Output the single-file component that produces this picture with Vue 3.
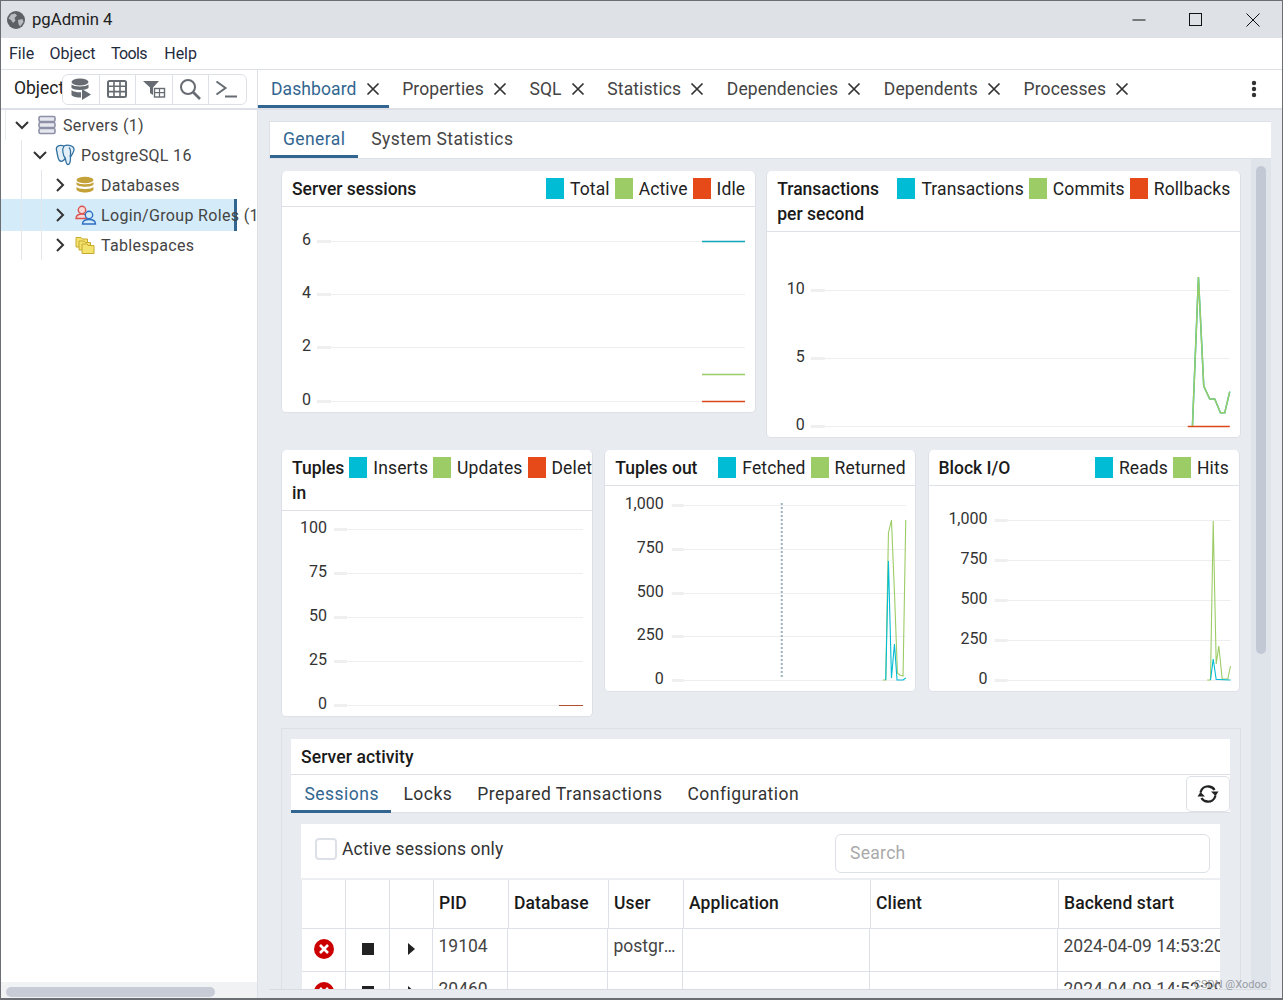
<script setup>
const mainTabs = ['Dashboard', 'Properties', 'SQL', 'Statistics', 'Dependencies', 'Dependents', 'Processes']
const menus = ['File', 'Object', 'Tools', 'Help']
const T = '#00bcd4', G = '#9ccc65', R = '#e64a19'

const row1 = [
  {
    title: 'Server sessions', legend: [['Total', T], ['Active', G], ['Idle', R]],
    vx: 282, vy: 207, w: 473,
    labelEnd: 311, tick: [317, 331], end: 745,
    ticks: [['6', 241], ['4', 294], ['2', 347], ['0', 401]],
    series: [
      ['#0fa5bd', '702,241.5 745,241.5'],
      [G, '702,374.5 745,374.5'],
      ['#d9471a', '702,401.5 745,401.5']
    ]
  },
  {
    title: 'Transactions per second', legend: [['Transactions', T], ['Commits', G], ['Rollbacks', R]],
    vx: 767.25, vy: 232, w: 473,
    labelEnd: 805, tick: [811, 825], end: 1230,
    ticks: [['10', 290], ['5', 358], ['0', 426]],
    series: [
      [T, '1192.7,426 1198.7,277 1204,386 1210,399 1215,399 1220.7,412.7 1225,412.7 1230,391.7'],
      [G, '1192.7,426 1198.7,277 1204,386 1210,399 1215,399 1220.7,412.7 1225,412.7 1230,391.7'],
      ['#d9471a', '1188,426.5 1230,426.5']
    ]
  }
]

const row2 = [
  {
    title: 'Tuples in', legend: [['Inserts', T], ['Updates', G], ['Deleted', R]],
    vx: 282, vy: 511, w: 310,
    labelEnd: 327, tick: [334, 347], end: 583,
    ticks: [['100', 529], ['75', 573], ['50', 617], ['25', 661], ['0', 705]],
    series: [['#b5502f', '559,705.5 583,705.5']]
  },
  {
    title: 'Tuples out', legend: [['Fetched', T], ['Returned', G]],
    vx: 605.25, vy: 486, w: 310,
    labelEnd: 664, tick: [672, 684], end: 906,
    ticks: [['1,000', 505], ['750', 549], ['500', 593], ['250', 636], ['0', 680]],
    dashed: [782, 503, 679],
    series: [
      [G, '883,680 886,680 888.7,533 891.7,520 895,600 897.7,673 900,675 903.3,676 906,520'],
      [T, '886,680 888.7,561 891.7,678 894.7,644 897.3,680 903.3,680 906,678']
    ]
  },
  {
    title: 'Block I/O', legend: [['Reads', T], ['Hits', G]],
    vx: 928.5, vy: 486, w: 310,
    labelEnd: 987, tick: [994, 1007], end: 1230,
    ticks: [['1,000', 520], ['750', 560], ['500', 600], ['250', 640], ['0', 680]],
    series: [
      [G, '1206.7,680 1210,680 1212.7,521 1215.7,664 1218.3,646 1221.7,679 1227.3,679 1230,666'],
      [T, '1210,680 1212.7,659 1215.7,679.5 1218.3,679.5 1230,680']
    ]
  }
]

const activityTabs = ['Sessions', 'Locks', 'Prepared Transactions', 'Configuration']
const heads = ['', '', '', 'PID', 'Database', 'User', 'Application', 'Client', 'Backend start']
const rows = [
  { pid: '19104', user: 'postgres', start: '2024-04-09 14:53:20' },
  { pid: '20460', user: '', start: '2024-04-09 14:52:39' }
]
</script>

<template>
  <div class="app">
    <header class="titlebar">
      <svg class="globe" width="20" height="20" viewBox="0 0 20 20">
        <circle cx="10" cy="10" r="9" fill="#5d6166" />
        <path d="M5 4.5 9 3.5 11 5.5 8.5 8 9.5 10.5 7 13 5 10 2.5 8.5Z" fill="#b9bdc2" />
        <path d="M12 10 16.5 9 17.5 12 14 16.5 12.5 14Z" fill="#b9bdc2" />
      </svg>
      <span class="wintitle">pgAdmin 4</span>
      <div class="winctl">
        <svg width="14" height="14" viewBox="0 0 14 14"><path d="M0.5 7H13.5" stroke="#111" fill="none" /></svg>
        <svg width="14" height="14" viewBox="0 0 14 14"><rect x="0.5" y="0.5" width="12" height="12" stroke="#111" fill="none" /></svg>
        <svg width="14" height="14" viewBox="0 0 14 14"><path d="M0.5 0.5 13.5 13.5M13.5 0.5 0.5 13.5" stroke="#111" fill="none" /></svg>
      </div>
    </header>

    <nav class="menubar">
      <span v-for="m in menus" :key="m" class="menu">{{ m }}</span>
    </nav>

    <div class="workspace">
      <aside class="browser">
        <div class="browser-head">
          <span class="browser-tab">Object Explorer</span>
          <div class="tools">
            <button class="tool">
              <svg width="22" height="24" viewBox="0 0 22 24">
                <ellipse cx="10" cy="5" rx="8.5" ry="3.5" fill="#666c72" />
                <path d="M1.5 7.5C4 10 16 10 18.500 7.500V11C16 13.500 4 13.500 1.500 11Z" fill="#666c72" />
                <path d="M1.5 13C4 15.500 10 15.500 11 15.200V20.500C7 20.500 3 20 1.500 18Z" fill="#666c72" />
                <path d="M12 12 21 17.500 12 23Z" fill="#666c72" />
              </svg>
            </button>
            <button class="tool">
              <svg width="20" height="18" viewBox="0 0 20 18">
                <rect x="1" y="1" width="18" height="16" rx="1.5" fill="none" stroke="#666c72" stroke-width="2" />
                <path d="M1 6.300H19M1 11.600H19M7 1V17M13 1V17" stroke="#666c72" stroke-width="1.600" />
              </svg>
            </button>
            <button class="tool">
              <svg width="24" height="20" viewBox="0 0 24 20">
                <path d="M1 2H17L11 8.500V16L8 14V8.500Z" fill="#666c72" />
                <rect x="12.500" y="9.500" width="10" height="8.500" fill="#fff" stroke="#666c72" stroke-width="1.400" />
                <path d="M12.500 13.700H22.500M17.500 9.500V18" stroke="#666c72" stroke-width="1.200" />
              </svg>
            </button>
            <button class="tool">
              <svg width="22" height="22" viewBox="0 0 22 22">
                <circle cx="9" cy="9" r="7" fill="none" stroke="#666c72" stroke-width="2" />
                <path d="M14 14 21 21" stroke="#666c72" stroke-width="2.600" />
              </svg>
            </button>
            <button class="tool">
              <svg width="24" height="20" viewBox="0 0 24 20">
                <path d="M1.500 2.500 10.500 9 1.500 15.500" fill="none" stroke="#666c72" stroke-width="2" />
                <path d="M10 17.500H22" stroke="#666c72" stroke-width="2" />
              </svg>
            </button>
          </div>
        </div>

        <div class="tree">
          <div class="row lv0">
            <svg class="chev" width="16" height="16" viewBox="0 0 16 16"><path d="M2 5 8 11 14 5" fill="none" stroke="#333" stroke-width="2" /></svg>
            <svg class="ico" width="20" height="20" viewBox="0 0 20 20">
              <g fill="#e7e8ef" stroke="#8d90a6" stroke-width="1.600">
                <rect x="2" y="1.500" width="16" height="5" rx="1.500" />
                <rect x="2" y="7.500" width="16" height="5" rx="1.500" />
                <rect x="2" y="13.500" width="16" height="5" rx="1.500" />
              </g>
            </svg>
            <span class="label">Servers (1)</span>
          </div>
          <div class="row lv1">
            <svg class="chev" width="16" height="16" viewBox="0 0 16 16"><path d="M2 5 8 11 14 5" fill="none" stroke="#333" stroke-width="2" /></svg>
            <svg class="ico" width="20" height="22" viewBox="0 0 20 22">
              <path d="M1.500 6C0.500 2 5 0.500 9 2 12 0.500 19.500 1 19 6 18.500 9 16.500 11 15.500 13 15.500 17 15 20.500 13 20.500 11 20.500 10.800 16 10.300 14.500 8.500 17 6 18.500 4 16 2.500 13.500 2.500 10 1.500 6Z" fill="#e2eff8" stroke="#2f6f9f" stroke-width="1.300" />
              <path d="M9 2C7 5 7.500 10.500 10.300 14.500M14 3.500C16.500 6 15.500 10.500 15 13" fill="none" stroke="#2f6f9f" stroke-width="1.200" />
            </svg>
            <span class="label">PostgreSQL 16</span>
          </div>
          <div class="row lv2">
            <svg class="chev" width="16" height="16" viewBox="0 0 16 16"><path d="M5 2 11 8 5 14" fill="none" stroke="#333" stroke-width="2" /></svg>
            <svg class="ico" width="20" height="18" viewBox="0 0 20 18">
              <ellipse cx="10" cy="4" rx="8.500" ry="3.200" fill="#c4a23a" />
              <path d="M1.500 6C3 9 17 9 18.500 6V8.500C17 11.500 3 11.500 1.500 8.500Z" fill="#c4a23a" />
              <path d="M1.500 10.800C3 13.800 17 13.800 18.500 10.800V13.500C17 17.500 3 17.500 1.500 13.500Z" fill="#c4a23a" />
            </svg>
            <span class="label">Databases</span>
          </div>
          <div class="row lv2 selected">
            <svg class="chev" width="16" height="16" viewBox="0 0 16 16"><path d="M5 2 11 8 5 14" fill="none" stroke="#333" stroke-width="2" /></svg>
            <svg class="ico roles" width="22" height="20" viewBox="0 0 22 20">
              <circle cx="7" cy="5" r="3.700" fill="#f7d9d9" stroke="#d9534f" stroke-width="1.400" />
              <path d="M1 13.500C1 10 4 9 7 9 9 9 10.500 9.500 11.500 10.500V13.500Z" fill="#f7d9d9" stroke="#d9534f" stroke-width="1.400" />
              <circle cx="14" cy="10" r="3.700" fill="#d4ecfa" stroke="#2f6fc4" stroke-width="1.400" />
              <path d="M7.500 19C7.500 15.500 10.500 14.500 14 14.500S20.500 15.500 20.500 19Z" fill="#d4ecfa" stroke="#2f6fc4" stroke-width="1.400" />
            </svg>
            <span class="label">Login/Group Roles (1)</span>
          </div>
          <div class="row lv2">
            <svg class="chev" width="16" height="16" viewBox="0 0 16 16"><path d="M5 2 11 8 5 14" fill="none" stroke="#333" stroke-width="2" /></svg>
            <svg class="ico" width="20" height="20" viewBox="0 0 20 20">
              <path d="M1 2.500H6L7.500 4H12.500V12H1Z" fill="#f3e36d" stroke="#c7a92e" />
              <path d="M4 6H9L10.500 7.500H15.500V15H4Z" fill="#f3e36d" stroke="#c7a92e" />
              <path d="M7 9H12L13 10.500H19V18.500H7Z" fill="#f3e36d" stroke="#c7a92e" />
            </svg>
            <span class="label">Tablespaces</span>
          </div>
        </div>

        <div class="hscroll"><div class="hthumb"></div></div>
      </aside>

      <main class="main">
        <div class="tabbar">
          <div v-for="(t, i) in mainTabs" :key="t" class="mtab" :class="{ on: i === 0 }">
            <span>{{ t }}</span>
            <svg width="14" height="14" viewBox="0 0 14 14"><path d="M1.500 1.500 12.500 12.500M12.500 1.500 1.500 12.500" stroke="#333" stroke-width="1.700" fill="none" /></svg>
          </div>
          <svg class="more" width="6" height="18" viewBox="0 0 6 18">
            <circle cx="3" cy="3" r="2.200" fill="#333" />
            <circle cx="3" cy="9" r="2.200" fill="#333" />
            <circle cx="3" cy="15" r="2.200" fill="#333" />
          </svg>
        </div>

        <div class="dash">
          <div class="dash-tabs">
            <span class="dtab on">General</span>
            <span class="dtab">System Statistics</span>
          </div>
          <div class="dash-body">
            <div class="scroll">
              <section class="grid two">
                <article v-for="c in row1" :key="c.title" class="card">
                  <div class="card-head">
                    <div class="card-title">{{ c.title }}</div>
                    <div class="legend">
                      <template v-for="l in c.legend" :key="l[0]">
                        <i class="swatch" :style="{ background: l[1] }"></i>
                        <span class="ltext">{{ l[0] }}</span>
                      </template>
                    </div>
                  </div>
                  <svg class="plot" :width="c.w" height="205" :viewBox="`${c.vx} ${c.vy} ${c.w} 205`">
                    <g v-for="t in c.ticks" :key="t[0]">
                      <text :x="c.labelEnd" :y="t[1] + 4" text-anchor="end" class="tick">{{ t[0] }}</text>
                      <line :x1="c.tick[0]" :x2="c.tick[1]" :y1="t[1] + 0.5" :y2="t[1] + 0.5" stroke="#efefef" stroke-width="3" />
                      <line :x1="c.tick[1]" :x2="c.end" :y1="t[1] + 0.5" :y2="t[1] + 0.5" stroke="#eeeeee" />
                    </g>
                    <polyline v-for="s in c.series" :key="s[0]" :points="s[1]" :stroke="s[0]" fill="none" stroke-width="1.500" />
                  </svg>
                </article>
              </section>

              <section class="grid three">
                <article v-for="c in row2" :key="c.title" class="card">
                  <div class="card-head">
                    <div class="card-title">{{ c.title }}</div>
                    <div class="legend">
                      <template v-for="l in c.legend" :key="l[0]">
                        <i class="swatch" :style="{ background: l[1] }"></i>
                        <span class="ltext">{{ l[0] }}</span>
                      </template>
                    </div>
                  </div>
                  <svg class="plot" :width="c.w" height="205" :viewBox="`${c.vx} ${c.vy} ${c.w} 205`">
                    <g v-for="t in c.ticks" :key="t[0]">
                      <text :x="c.labelEnd" :y="t[1] + 4" text-anchor="end" class="tick">{{ t[0] }}</text>
                      <line :x1="c.tick[0]" :x2="c.tick[1]" :y1="t[1] + 0.5" :y2="t[1] + 0.5" stroke="#efefef" stroke-width="3" />
                      <line :x1="c.tick[1]" :x2="c.end" :y1="t[1] + 0.5" :y2="t[1] + 0.5" stroke="#eeeeee" />
                    </g>
                    <line v-if="c.dashed" :x1="c.dashed[0]" :x2="c.dashed[0]" :y1="c.dashed[1]" :y2="c.dashed[2]" stroke="#9db3bf" stroke-width="2" stroke-dasharray="2 2" />
                    <polyline v-for="s in c.series" :key="s[0]" :points="s[1]" :stroke="s[0]" fill="none" stroke-width="1.100" />
                  </svg>
                </article>
              </section>

              <section class="activity">
                <div class="act-title">Server activity</div>
                <div class="act-tabs">
                  <span v-for="(t, i) in activityTabs" :key="t" class="atab" :class="{ on: i === 0 }">{{ t }}</span>
                  <button class="refresh">
                    <svg width="22" height="20" viewBox="0 0 22 20">
                      <path d="M3.500 8.500C4.500 4.500 8 2 12 2.500 14.500 2.800 16.500 4 17.500 6" fill="none" stroke="#222" stroke-width="2.300" />
                      <path d="M21.500 8.500 14 8.500 18.500 13Z" fill="#222" transform="translate(0 -1)" />
                      <path d="M18.500 11.500C17.500 15.500 14 18 10 17.500 7.500 17.200 5.500 16 4.500 14" fill="none" stroke="#222" stroke-width="2.300" />
                      <path d="M0.500 11.500 8 11.500 3.500 7Z" fill="#222" transform="translate(0 1)" />
                    </svg>
                  </button>
                </div>
                <div class="act-tools">
                  <label class="check"><i class="box"></i><span>Active sessions only</span></label>
                  <div class="search">Search</div>
                </div>
                <div class="table">
                  <div class="thead">
                    <div v-for="(h, i) in heads" :key="i" class="th">{{ h }}</div>
                  </div>
                  <div v-for="r in rows" :key="r.pid" class="tr">
                    <div class="td center">
                      <svg width="22" height="22" viewBox="0 0 22 22">
                        <circle cx="11" cy="11" r="10" fill="#cc0000" />
                        <path d="M7 7 15 15M15 7 7 15" stroke="#fff" stroke-width="2.600" />
                      </svg>
                    </div>
                    <div class="td center"><i class="stop"></i></div>
                    <div class="td center"><i class="play"></i></div>
                    <div class="td">{{ r.pid }}</div>
                    <div class="td"></div>
                    <div class="td ell">{{ r.user }}</div>
                    <div class="td"></div>
                    <div class="td"></div>
                    <div class="td nowrap">{{ r.start }}</div>
                  </div>
                </div>
              </section>
            </div>
            <div class="vtrack"><div class="vthumb"></div></div>
          </div>
        </div>
      </main>
    </div>
    <span class="mark">CSDN @Xodoo</span>
  </div>
</template>

<style>
html, body { margin: 0; padding: 0; background: #e8ebf0; }
</style>

<style scoped>
.app {
  position: relative;
  width: 1283px;
  height: 1000px;
  box-sizing: border-box;
  border: 1px solid #6b6f73;
  border-bottom-width: 2px;
  border-top-width: 1px;
  overflow: hidden;
  display: flex;
  flex-direction: column;
  background: #e8ebf0;
  font-family: Roboto, "Liberation Sans", sans-serif;
  font-size: 17.5px;
  color: #222;
}
.titlebar {
  height: 37px;
  flex: none;
  background: #dee1e6;
  display: flex;
  align-items: center;
}
.globe { margin-left: 5px; }
.wintitle { margin-left: 6px; font-size: 16.7px; color: #222; }
.winctl {
  margin-left: auto;
  display: flex;
  gap: 43px;
  margin-right: 22px;
  margin-top: 1px;
}
.menubar {
  height: 31px;
  flex: none;
  background: #fff;
  display: flex;
  align-items: center;
  border-bottom: 1px solid #dde0e6;
  padding-left: 8px;
  gap: 15.5px;
  font-size: 16px;
}
.menu { color: #1f2b3d; }
.menu:nth-child(3) { letter-spacing: -.7px; margin-right: 2px; }
.workspace { flex: 1; display: flex; min-height: 0; }

.browser {
  width: 256px;
  flex: none;
  background: #fff;
  border-right: 1px solid #dde0e6;
  display: flex;
  flex-direction: column;
  overflow: hidden;
}
.browser-head {
  height: 38px;
  flex: none;
  display: flex;
  align-items: center;
  border-bottom: 2px solid #dde0e6;
  box-sizing: content-box;
}
.browser-tab {
  width: 48px;
  margin-left: 13px;
  padding-bottom: 3px;
  overflow: hidden;
  white-space: nowrap;
  flex: none;
}
.tools {
  display: flex;
  height: 29px;
  border: 1px solid #dde0e6;
  border-radius: 6px;
  flex: none;
}
.tool {
  width: 36.5px;
  padding: 0;
  border: 0;
  border-right: 1px solid #dde0e6;
  background: #fff;
  display: flex;
  align-items: center;
  justify-content: center;
}
.tool:first-child { border-radius: 6px 0 0 6px; }
.tool:last-child { border-right: 0; border-radius: 0 6px 6px 0; }

.tree { flex: 1; overflow: hidden; font-size: 16px; letter-spacing: .33px; color: #444; }
.row {
  height: 30px;
  display: flex;
  align-items: center;
  white-space: nowrap;
  background-repeat: no-repeat;
}
.chev { flex: none; margin-right: 7px; }
.ico { flex: none; margin-right: 6px; }
.ico.roles { margin-right: 4px; }
.lv0 {
  padding-left: 13px;
  background-image: linear-gradient(#e9ebef, #e9ebef);
  background-size: 1px 100%;
  background-position: 4px 0;
}
.lv1 { padding-left: 31px; }
.lv2 { padding-left: 51px; }
.lv1 {
  background-image: linear-gradient(#e3e6eb, #e3e6eb);
  background-size: 1px 100%;
  background-position: 20px 0;
}
.lv2 {
  background-image: linear-gradient(#e3e6eb, #e3e6eb), linear-gradient(#e3e6eb, #e3e6eb);
  background-size: 1px 100%, 1px 100%;
  background-position: 20px 0, 40px 0;
}
.lv2.selected {
  height: 32px;
  margin: -1px 0;
  background-image:
    linear-gradient(#e3e6eb, #e3e6eb),
    linear-gradient(#e3e6eb, #e3e6eb),
    linear-gradient(to right, #d4ecfa 233px, #326690 233px, #326690 236px, transparent 236px);
  background-size: 1px 100%, 1px 100%, 100% 100%;
  background-position: 20px 0, 40px 0, 0 0;
}
.hscroll {
  height: 16px;
  flex: none;
  background: #f1f2f4;
  display: flex;
  align-items: flex-end;
  padding-left: 5px;
  box-sizing: border-box;
  padding-bottom: 1px;
}
.hthumb { width: 209px; height: 10px; border-radius: 5px; background: #c8ccd7; }

.main { flex: 1; min-width: 0; display: flex; flex-direction: column; }
.tabbar {
  height: 38px;
  flex: none;
  background: #fff;
  display: flex;
  align-items: stretch;
  border-bottom: 2px solid #dde0e6;
  box-sizing: content-box;
  color: #444;
  letter-spacing: .1px;
}
.mtab {
  display: flex;
  align-items: center;
  padding: 0 9.7px 0 13px;
  gap: 9px;
  box-sizing: border-box;
  height: 38px;
}
.mtab.on { color: #326690; border-bottom: 3px solid #326690; padding-top: 3px; }
.more { margin: auto 25px auto auto; }

.dash {
  flex: 1;
  min-height: 0;
  margin: 11px 11px 8px 11px;
  display: flex;
  flex-direction: column;
  border-bottom: 1px solid #d8dbe1;
}
.dash-tabs {
  height: 36px;
  flex: none;
  display: flex;
  background: #fff;
  border: 1px solid #dde0e6;
  border-width: 1px 0 1px 1px;
  letter-spacing: .4px;
}
.dtab {
  padding: 0 13px 2px;
  display: flex;
  align-items: center;
  color: #444;
}
.dtab.on { color: #326690; box-shadow: inset 0 -3px 0 #326690; }
.dash-body { flex: 1; min-height: 0; display: flex; }
.scroll {
  flex: 1;
  min-width: 0;
  overflow: hidden;
  padding: 12px 10px 0 12px;
}
.vtrack { width: 20px; flex: none; background: #dfe3ea; }
.vthumb { width: 10px; height: 488px; margin: 7px 0 0 5px; border-radius: 5px; background: #c3c8d5; }

.grid { display: grid; align-items: start; }
.two { grid-template-columns: 1fr 1fr; gap: 10.5px; margin-bottom: 12px; }
.three { grid-template-columns: 312px 312px 312px; gap: 11.25px; margin-bottom: 11px; }
.card {
  background: #fff;
  border: 1px solid #dde0e6;
  border-width: 0 1px 1px 1px;
  border-radius: 5px;
  overflow: hidden;
  min-width: 0;
}
.card-head {
  display: flex;
  gap: 5px;
  padding: 6px 9.5px 4px 10px;
  line-height: 25px;
  border-bottom: 1px solid #dde0e6;
}
.card-title { flex: 1 1 0; min-width: min-content; font-weight: 500; color: #1a1a1a; }
.legend { flex: none; display: flex; align-items: flex-start; height: 25px; white-space: nowrap; letter-spacing: .12px; }
.swatch { width: 18px; height: 21px; margin: 1px 6px 0 5px; flex: none; }
.swatch:first-child { margin-left: 0; }
.ltext { color: #222; }
.plot { display: block; }
.tick { font: 16px Roboto, "Liberation Sans", sans-serif; fill: #333; }

.activity {
  background: #e8ebf0;
  border: 1px solid #dde0e6;
  padding: 10px 10px 0 9px;
}
.act-title {
  height: 35px;
  line-height: 36px;
  padding-left: 10px;
  background: #fff;
  font-weight: 500;
  letter-spacing: .1px;
  color: #1a1a1a;
  border-bottom: 1px solid #dde0e6;
}
.act-tabs {
  height: 37px;
  display: flex;
  background: #fff;
  border-bottom: 1px solid #dde0e6;
  margin-bottom: 11px;
}
.atab {
  padding: 0 12.5px;
  display: flex;
  align-items: center;
  color: #333;
  letter-spacing: .47px;
}
.atab.on { color: #326690; padding: 0 12px 0 13.5px; box-shadow: 0 1px 0 #326690, inset 0 -2px 0 #326690; }
.refresh {
  margin-left: auto;
  width: 44px;
  height: 36px;
  margin-top: 1px;
  background: #fff;
  border: 1px solid #dde0e6;
  border-radius: 5px;
  padding: 0;
  display: flex;
  align-items: center;
  justify-content: center;
}
.act-tools {
  margin: 0 10px;
  height: 54px;
  display: flex;
  align-items: flex-start;
  background: #fff;
  border-bottom: 2px solid #eceef2;
}
.check { display: flex; align-items: center; margin: 14px 0 0 14px; gap: 5px; color: #333; letter-spacing: .15px; }
.box {
  width: 22px;
  height: 22px;
  box-sizing: border-box;
  border: 2px solid #dde0e6;
  border-radius: 4px;
  display: block;
}
.search {
  margin: 10px 10px 0 auto;
  width: 375px;
  height: 39px;
  box-sizing: border-box;
  border: 1px solid #dde0e6;
  border-radius: 6px;
  padding-left: 14px;
  line-height: 37px;
  color: #aaa;
  letter-spacing: .3px;
}
.table { margin: 0 10px 0 11px; background: #fff; overflow: hidden; }
.thead, .tr {
  display: grid;
  width: 1100px;
}
.thead { grid-template-columns: 44px 44px 44px 75px 100px 75px 187px 188px 343px; height: 48px; border-bottom: 1px solid #dde0e6; }
.tr { grid-template-columns: 44px 44px 43px 75px 100px 75px 187px 188px 344px; height: 43px; border-bottom: 1px solid #dde0e6; box-sizing: border-box; }
.th {
  border-right: 1px solid #dde0e6;
  padding: 0 5px 3px;
  display: flex;
  align-items: center;
  font-weight: 500;
  letter-spacing: .12px;
  color: #1a1a1a;
  box-sizing: border-box;
}
.td {
  border-right: 1px solid #dde0e6;
  padding: 7px 5.5px 0;
  color: #444;
  box-sizing: border-box;
  overflow: hidden;
  white-space: nowrap;
}
.td.ell { text-overflow: ellipsis; }
.td.center { padding: 0 0 3px; display: flex; align-items: center; justify-content: center; }
.stop { width: 12px; height: 12px; background: #222; display: block; }
.play {
  width: 0;
  height: 0;
  border-left: 7px solid #222;
  border-top: 6.5px solid transparent;
  border-bottom: 6.5px solid transparent;
  display: block;
}
.mark {
  position: absolute;
  right: 15px;
  bottom: 7px;
  font-size: 11px;
  color: #8a8f96;
  opacity: .85;
}
</style>
